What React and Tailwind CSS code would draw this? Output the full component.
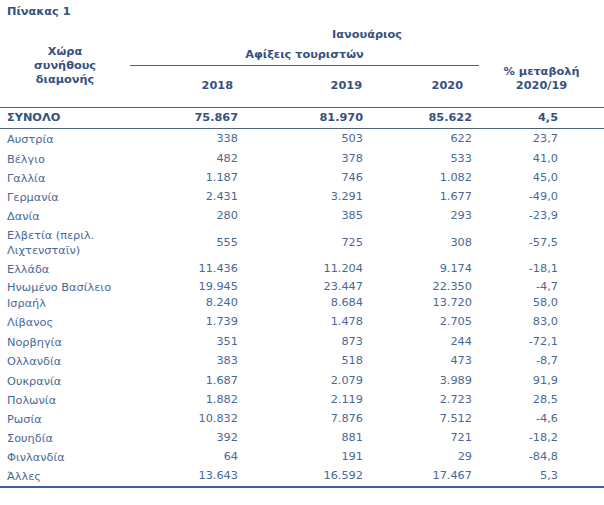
import React from "react";

const H = {
  16: "h-[16px]",
  17: "h-[17px]",
  19: "h-[19px]",
  20: "h-[20px]",
  21: "h-[21px]",
  34: "h-[34px]",
};

const rows = [
  ["Αυστρία", "338", "503", "622", "23,7", 20],
  ["Βέλγιο", "482", "378", "533", "41,0", 20],
  ["Γαλλία", "1.187", "746", "1.082", "45,0", 19],
  ["Γερμανία", "2.431", "3.291", "1.677", "-49,0", 19],
  ["Δανία", "280", "385", "293", "-23,9", 19],
  ["ELV", "555", "725", "308", "-57,5", 34],
  ["Ελλάδα", "11.436", "11.204", "9.174", "-18,1", 19],
  ["Ηνωμένο Βασίλειο", "19.945", "23.447", "22.350", "-4,7", 16],
  ["Ισραήλ", "8.240", "8.684", "13.720", "58,0", 17],
  ["Λίβανος", "1.739", "1.478", "2.705", "83,0", 21],
  ["Νορβηγία", "351", "873", "244", "-72,1", 19],
  ["Ολλανδία", "383", "518", "473", "-8,7", 19],
  ["Ουκρανία", "1.687", "2.079", "3.989", "91,9", 20],
  ["Πολωνία", "1.882", "2.119", "2.723", "28,5", 19],
  ["Ρωσία", "10.832", "7.876", "7.512", "-4,6", 19],
  ["Σουηδία", "392", "881", "721", "-18,2", 19],
  ["Φινλανδία", "64", "191", "29", "-84,8", 19],
  ["Άλλες", "13.643", "16.592", "17.467", "5,3", 19],
];

function Row({ r }) {
  const [name, a, b, c, d, h] = r;
  return (
    <div className={`flex items-center ${H[h]}`}>
      <div className="w-[130px] pl-[7px] leading-[15px]">
        {name === "ELV" ? (
          <>
            Ελβετία (περιλ.
            <br />
            Λιχτενσταϊν)
          </>
        ) : (
          name
        )}
      </div>
      <div className="w-[115px] pr-[7px] text-right">{a}</div>
      <div className="w-[125px] pr-[7px] text-right">{b}</div>
      <div className="w-[109px] pr-[7px] text-right">{c}</div>
      <div className="w-[125px] pr-[46px] text-right">{d}</div>
    </div>
  );
}

export default function App() {
  return (
    <div
      className="w-[604px] h-[505px] bg-white text-[11.3px] text-[#4a6896] overflow-hidden"
      style={{ fontFamily: '"DejaVu Sans", Verdana, sans-serif' }}
    >
      <div className="h-[25px] flex items-center pl-[7px] font-bold text-[#35527f]">
        Πίνακας 1
      </div>
      <div className="grid grid-cols-[130px_115px_125px_109px_125px] grid-rows-[20px_21px_41px] border-b border-[#526275] font-bold text-[#35527f]">
        <div className="row-span-3 flex items-center justify-center text-center leading-[14px]">
          Χώρα
          <br />
          συνήθους
          <br />
          διαμονής
        </div>
        <div className="col-span-4 flex items-center justify-center">
          Ιανουάριος
        </div>
        <div className="col-span-3 flex items-center justify-center border-b border-[#526275]">
          Αφίξεις τουριστών
        </div>
        <div className="row-span-2 flex items-center justify-center text-center leading-[14px] pt-[5px]">
          % μεταβολή
          <br />
          2020/19
        </div>
        <div className="flex items-center justify-end pr-[12px]">2018</div>
        <div className="flex items-center justify-end pr-[8px]">2019</div>
        <div className="flex items-center justify-end pr-[16px]">2020</div>
      </div>
      <div className="flex items-center h-[21px] border-b border-[#526275] font-bold text-[#35527f]">
        <div className="w-[130px] pl-[7px]">ΣΥΝΟΛΟ</div>
        <div className="w-[115px] pr-[7px] text-right">75.867</div>
        <div className="w-[125px] pr-[7px] text-right">81.970</div>
        <div className="w-[109px] pr-[7px] text-right">85.622</div>
        <div className="w-[125px] pr-[46px] text-right">4,5</div>
      </div>
      <div className="border-b-2 border-[#3b62a0]">
        {rows.map((r) => (
          <Row key={r[0]} r={r} />
        ))}
      </div>
    </div>
  );
}
